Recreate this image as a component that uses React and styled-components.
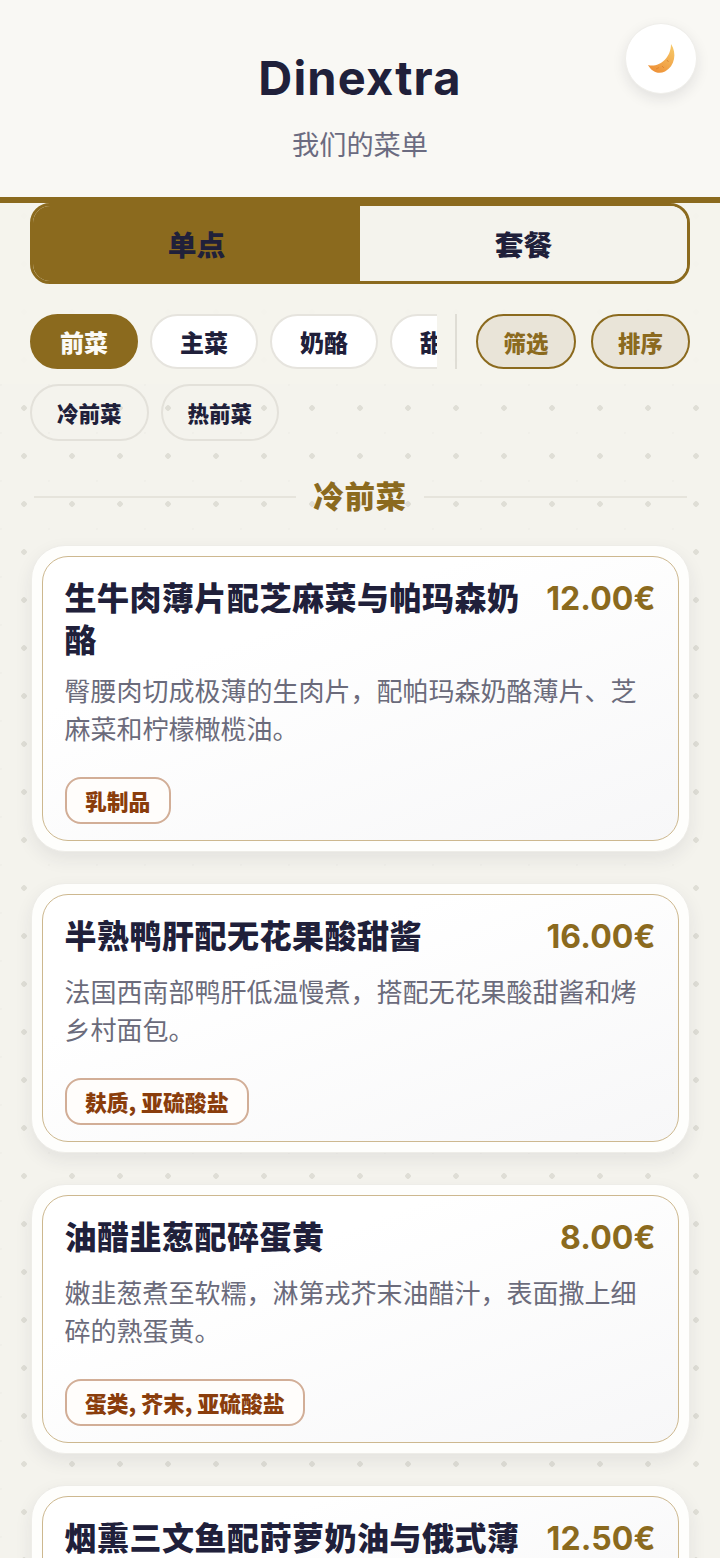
import React from "react";
import styled, { createGlobalStyle } from "styled-components";

const CATEGORIES = ["前菜", "主菜", "奶酪", "甜点"];
const SUBCATEGORIES = ["冷前菜", "热前菜"];

const DISHES = [
  {
    name: "生牛肉薄片配芝麻菜与帕玛森奶酪",
    price: "12.00€",
    desc: "臀腰肉切成极薄的生肉片，配帕玛森奶酪薄片、芝麻菜和柠檬橄榄油。",
    allergens: "乳制品",
  },
  {
    name: "半熟鸭肝配无花果酸甜酱",
    price: "16.00€",
    desc: "法国西南部鸭肝低温慢煮，搭配无花果酸甜酱和烤乡村面包。",
    allergens: "麸质, 亚硫酸盐",
  },
  {
    name: "油醋韭葱配碎蛋黄",
    price: "8.00€",
    desc: "嫩韭葱煮至软糯，淋第戎芥末油醋汁，表面撒上细碎的熟蛋黄。",
    allergens: "蛋类, 芥末, 亚硫酸盐",
  },
  {
    name: "烟熏三文鱼配莳萝奶油与俄式薄饼",
    price: "12.50€",
  },
];

const MoonIcon = () => (
  <svg width="40" height="40" viewBox="0 0 40 40" aria-hidden="true">
    <defs>
      <linearGradient id="moonFill" x1="0.8" y1="0" x2="0.2" y2="1">
        <stop offset="0" stopColor="#f6c768" />
        <stop offset="1" stopColor="#ee8f35" />
      </linearGradient>
    </defs>
    <path d="M30 5C36 14 34 27 24 32.500C17 36 10 32 7 26C17 29 30 20 30 5Z" fill="url(#moonFill)" />
    <path d="M15 30l3-1.500M26 21l1.500 2M21 27l2 2" stroke="#d9822f" strokeWidth="0.8" fill="none" />
  </svg>
);

const App = () => {
  return (
    <Page>
      <GlobalStyle />
      <Header>
        <Brand>Dinextra</Brand>
        <Subtitle>我们的菜单</Subtitle>
        <ThemeButton type="button" aria-label="切换主题">
          <MoonIcon />
        </ThemeButton>
      </Header>

      <Controls>
        <Tabs>
          <Tab $active>单点</Tab>
          <Tab>套餐</Tab>
        </Tabs>

        <FilterRow>
          <CategoryScroller>
            {CATEGORIES.map((c, i) => (
              <CategoryPill key={c} $active={i === 0}>{c}</CategoryPill>
            ))}
          </CategoryScroller>
          <Divider />
          <ActionPill>筛选</ActionPill>
          <ActionPill>排序</ActionPill>
        </FilterRow>
      </Controls>

      <SubRow>
        {SUBCATEGORIES.map((s) => (
          <SubPill key={s}>{s}</SubPill>
        ))}
      </SubRow>

      <Content>
        <SectionHead>
          <SectionLine />
          <SectionTitle>冷前菜</SectionTitle>
          <SectionLine />
        </SectionHead>

        <CardList>
          {DISHES.map((d) => (
            <Card key={d.name}>
              <CardInner>
                <CardTop>
                  <DishName>{d.name}</DishName>
                  <Price>{d.price}</Price>
                </CardTop>
                {d.desc && <Desc>{d.desc}</Desc>}
                {d.allergens && <Allergen>{d.allergens}</Allergen>}
              </CardInner>
            </Card>
          ))}
        </CardList>
      </Content>
    </Page>
  );
};

export default App;

const CJK = `"Noto Sans CJK SC", sans-serif`;
const GOLD = "#8b6a1e";
const INK = "#20203a";

const GlobalStyle = createGlobalStyle`
  html, body {
    margin: 0;
    padding: 0;
  }
  * {
    box-sizing: border-box;
  }
  button {
    font-family: inherit;
  }
`;

const Page = styled.div`
  width: 720px;
  height: 1558px;
  overflow: hidden;
  font-family: ${CJK};
  color: ${INK};
  background-color: #f4f3ed;
  background-image:
    radial-gradient(circle at 24px 24px, #dfded6 2.5px, transparent 3px),
    radial-gradient(circle at 0 0, #f0efe9 2px, transparent 2.5px);
  background-size: 48px 48px;
`;

const Header = styled.header`
  position: relative;
  height: 203px;
  padding-top: 46px;
  background: #f9f8f4;
  border-bottom: 6px solid ${GOLD};
  text-align: center;
`;

const Brand = styled.h1`
  margin: 0;
  font-family: Inter, ${CJK};
  font-size: 47px;
  line-height: 64px;
  font-weight: 700;
  letter-spacing: 1.2px;
  color: ${INK};
`;

const Subtitle = styled.p`
  margin: 13px 0 0;
  font-size: 27.200px;
  line-height: 40px;
  font-weight: 400;
  color: #6b6b80;
`;

const ThemeButton = styled.button`
  position: absolute;
  top: 23px;
  right: 23px;
  width: 72px;
  height: 71px;
  padding: 0;
  display: flex;
  align-items: center;
  justify-content: center;
  border: 1px solid #efeeea;
  border-radius: 50%;
  background: #ffffff;
  box-shadow: 0 5px 14px rgba(30, 30, 50, 0.1);
`;

const Controls = styled.section`
  padding: 0 30px 15px;
  background: rgba(244, 243, 237, 0.95);
`;

const Tabs = styled.div`
  display: grid;
  grid-template-columns: 1fr 1fr;
  height: 81px;
  border: 3px solid ${GOLD};
  border-radius: 20px;
  overflow: hidden;
`;

const Tab = styled.div`
  display: flex;
  align-items: center;
  justify-content: center;
  font-size: 28.800px;
  font-weight: 900;
  color: ${INK};
  background: ${(p) => (p.$active ? GOLD : "#f4f3ed")};
`;

const FilterRow = styled.div`
  display: flex;
  align-items: stretch;
  height: 55px;
  margin-top: 30px;
`;

const CategoryScroller = styled.div`
  display: flex;
  gap: 12px;
  width: 408px;
  overflow: hidden;
`;

const CategoryPill = styled.div`
  flex: none;
  display: flex;
  align-items: center;
  justify-content: center;
  width: 108px;
  border-radius: 28px;
  border: 2px solid ${(p) => (p.$active ? GOLD : "#e6e4de")};
  background: ${(p) => (p.$active ? GOLD : "#ffffff")};
  color: ${(p) => (p.$active ? "#fbfaf6" : INK)};
  font-size: 24px;
  font-weight: 900;
`;

const Divider = styled.div`
  width: 2px;
  margin: 0 19px 0 18px;
  background: #dfddd5;
`;

const ActionPill = styled.div`
  flex: none;
  display: flex;
  align-items: center;
  justify-content: center;
  width: 100px;
  margin-right: 15px;
  border: 2px solid ${GOLD};
  border-radius: 28px;
  background: #e9e4d8;
  color: ${GOLD};
  font-size: 22.400px;
  font-weight: 900;

  &:last-child {
    width: 99px;
    margin-right: 0;
  }
`;

const SubRow = styled.div`
  display: flex;
  gap: 12px;
  padding: 0 30px;
`;

const SubPill = styled.div`
  width: 118.500px;
  height: 57px;
  display: flex;
  align-items: center;
  justify-content: center;
  border: 2px solid #e3e1da;
  border-radius: 29px;
  font-size: 21.500px;
  font-weight: 900;
  color: ${INK};
`;

const Content = styled.main`
  padding: 24px 30.500px 0;
`;

const SectionHead = styled.div`
  display: flex;
  align-items: center;
  gap: 17px;
  padding: 0 3px;
  height: 60px;
`;

const SectionLine = styled.div`
  flex: 1;
  height: 2px;
  margin-top: 3px;
  background: #e6e4dc;
`;

const SectionTitle = styled.h2`
  margin: 0;
  font-size: 30.500px;
  line-height: 44px;
  font-weight: 900;
  letter-spacing: 0.7px;
  color: ${GOLD};
`;

const CardList = styled.div`
  display: flex;
  flex-direction: column;
  gap: 31.500px;
  margin-top: 20px;
`;

const Card = styled.article`
  padding: 10px;
  border-radius: 34px;
  background: #fefefc;
  border: 1px solid #eeede8;
  box-shadow: 0 7px 18px rgba(40, 40, 60, 0.08);
`;

const CardInner = styled.div`
  padding: 19px 22px 15.500px;
  border: 1.500px solid #cdb88f;
  border-radius: 26px;
  background: linear-gradient(160deg, #ffffff 30%, #f7f7f8 100%);
`;

const CardTop = styled.div`
  display: flex;
  align-items: flex-start;
  justify-content: space-between;
  gap: 22px;
`;

const DishName = styled.h3`
  margin: 0;
  flex: 1;
  font-size: 32px;
  line-height: 41.600px;
  font-weight: 900;
  letter-spacing: 0.5px;
  color: ${INK};
`;

const Price = styled.div`
  flex: none;
  font-family: Inter, ${CJK};
  font-size: 32px;
  line-height: 46px;
  font-weight: 700;
  letter-spacing: 0.1px;
  color: ${GOLD};
`;

const Desc = styled.p`
  margin: 12px 0 0;
  font-size: 26px;
  line-height: 38px;
  font-weight: 400;
  color: #6b6b7b;
`;

const Allergen = styled.span`
  display: block;
  width: fit-content;
  margin-top: 30px;
  padding: 0 18.500px;
  height: 47px;
  line-height: 43px;
  border: 2px solid #d2ae97;
  border-radius: 16px;
  background: #fffdfb;
  font-size: 21.800px;
  font-weight: 900;
  color: #8a3d0c;
`;
